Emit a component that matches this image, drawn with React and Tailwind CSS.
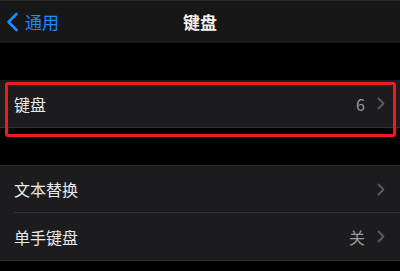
import React from 'react';

const Chevron = () => (
  <svg width="8" height="13" viewBox="0 0 8 13" className="ml-3">
    <path d="M1.5 1.5 L6.5 6.5 L1.5 11.5" fill="none" stroke="#5c5c60" strokeWidth="1.8" strokeLinecap="round" strokeLinejoin="round" />
  </svg>
);

const Row = ({ label, value, last }) => (
  <div className="flex h-[47px] items-center pl-[14px]">
    <div className={`flex h-full flex-1 items-center pr-[15px] ${last ? '' : 'border-b border-[#333335]'}`}>
      <span className="flex-1 text-[16px] text-[#e8e8e8]">{label}</span>
      {value && <span className="text-[16px] text-[#9a9a9e]">{value}</span>}
      <Chevron />
    </div>
  </div>
);

const App = () => {
  return (
    <div className="h-[271px] w-[400px] overflow-hidden bg-black" style={{ fontFamily: '"Noto Sans CJK SC", "Noto Sans", sans-serif' }}>
      <div className="relative flex h-[43px] items-center justify-center border-t border-[#2a2a2a] bg-[#171717]">
        <div className="absolute left-[6px] top-0 flex h-full items-center">
          <svg width="13" height="20" viewBox="0 0 13 20">
            <path d="M10.5 2 L2.5 10 L10.5 18" fill="none" stroke="#1a8cff" strokeWidth="2.6" strokeLinecap="round" strokeLinejoin="round" />
          </svg>
          <span className="ml-[6px] text-[17px] text-[#1a8cff]">通用</span>
        </div>
        <span className="text-[17px] font-semibold text-[#f2f2f2]">键盘</span>
      </div>

      <div className="h-[37px]" />

      <div className="relative border-b border-[#333335] bg-[#1c1c1e]">
        <Row label="键盘" value="6" last />
        <div className="pointer-events-none absolute left-[5px] right-[4px] top-[2px] h-[55px] rounded-[3px] border-[3px] border-[#f01a1a]" />
      </div>

      <div className="h-[37px]" />

      <div className="border-y border-[#2c2c2e] bg-[#1c1c1e]">
        <Row label="文本替换" />
        <Row label="单手键盘" value="关" last />
      </div>
    </div>
  );
};

export default App;
